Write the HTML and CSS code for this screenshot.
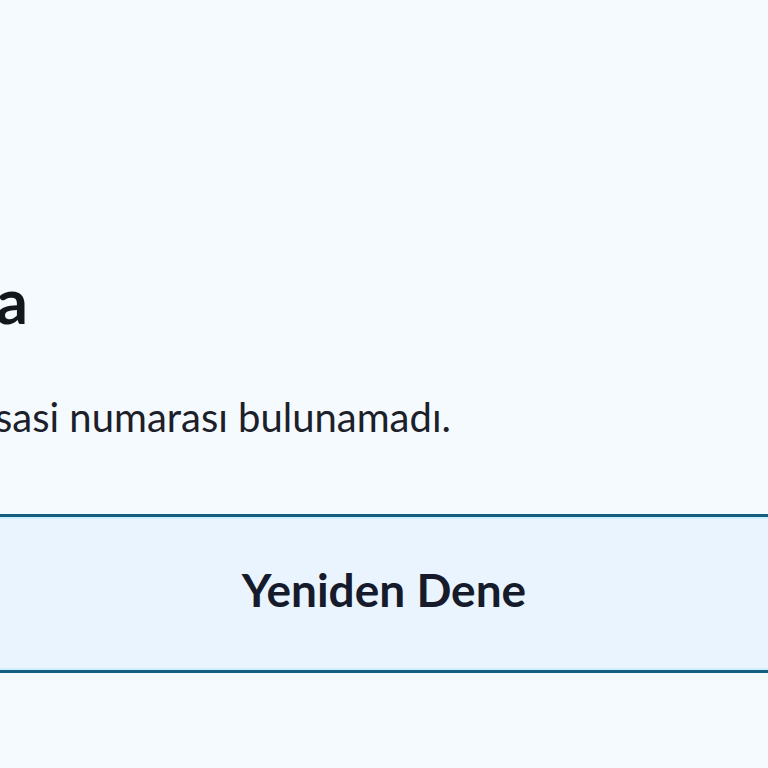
FILE: index.html
```html
<!DOCTYPE html>
<html lang="tr">
<head>
<meta charset="utf-8">
<link rel="stylesheet" href="styles.css">
</head>
<body>
<main class="page">
  <h1 class="title">a</h1>
  <p class="message">sasi numarası bulunamadı.</p>
  <button class="retry" type="button">Yeniden Dene</button>
</main>
</body>
</html>
```
FILE: styles.css
```css
html, body {
  margin: 0;
  padding: 0;
  background: #f5faff;
  overflow: hidden;
}
body {
  width: 768px;
  height: 768px;
  font-family: Lato, "Liberation Sans", sans-serif;
}
.page {
  display: flex;
  flex-direction: column;
  padding-top: 269px;
}
.title {
  margin: 0 0 0 -4px;
  font-size: 63px;
  line-height: 62px;
  font-weight: 700;
  color: #13161b;
}
.message {
  margin: 66px 0 0 -5px;
  font-size: 40px;
  line-height: 40px;
  font-weight: 400;
  color: #1c2029;
  white-space: nowrap;
}
.retry {
  margin: 77px -10px 0;
  padding: 50px 0 57px;
  border: 0;
  border-top: 3px solid #145f80;
  border-bottom: 3px solid #145f80;
  box-shadow: inset 0 2px 0 #cdeefa, inset 0 -2px 0 #cdeefa;
  background: #eaf4fe;
  font-family: Lato, "Liberation Sans", sans-serif;
  font-size: 46px;
  line-height: 46px;
  font-weight: 700;
  color: #161b2c;
  text-align: center;
}
```
